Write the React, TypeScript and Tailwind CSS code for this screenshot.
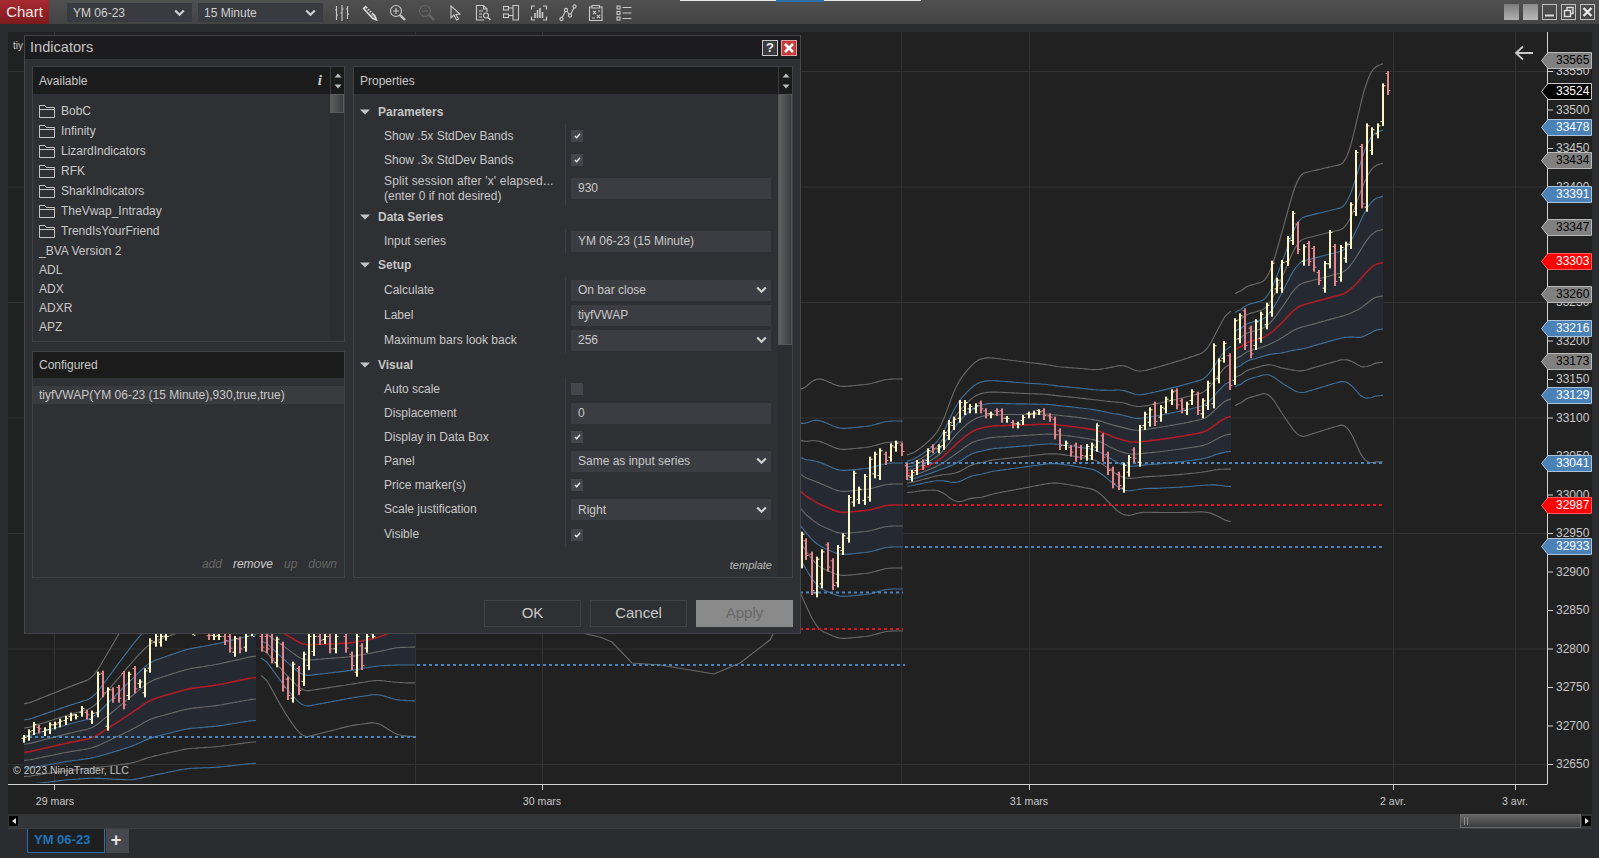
import React from "react";

type P = [number, number];
const z5 = (a: number[][]): P[] => a.map(([x, y]) => [x / 3, 620 + y / 3]);
const z6 = (a: number[][]): P[] => a.map(([x, y]) => [790 + x / 3, 350 + y / 3]);
const z7 = (a: number[][]): P[] => a.map(([x, y]) => [1200 + x / 3, 50 + y / 3]);

const interp = (pts: P[], x: number) => {
  if (x <= pts[0][0]) return pts[0][1];
  for (let i = 1; i < pts.length; i++) {
    if (x <= pts[i][0]) {
      const t = (x - pts[i - 1][0]) / (pts[i][0] - pts[i - 1][0]);
      return pts[i - 1][1] + t * (pts[i][1] - pts[i - 1][1]);
    }
  }
  return pts[pts.length - 1][1];
};

type Session = { x0: number; x1: number; mid: P[]; w: P[] };
const sessions: Session[] = [
  {
    x0: 24, x1: 256,
    mid: [[24, 753], [67, 743], [93, 738], [110, 727], [133, 712], [150, 700], [187, 689], [217, 685], [256, 677]],
    w: [[24, 8], [60, 9], [93, 10], [110, 13], [133, 17], [150, 19], [256, 21.5]],
  },
  {
    x0: 261, x1: 415,
    mid: [[261, 622], [287, 635], [303, 645], [350, 643], [377, 638], [397, 630], [415, 629]],
    w: [[261, 8], [287, 13.6], [303, 15.5], [350, 13.8], [377, 14], [397, 17.5], [415, 18]],
  },
  {
    x0: 795, x1: 903,
    mid: [[795, 485], [801, 493], [817, 503], [840, 513], [870, 510], [887, 505], [903, 505]],
    w: [[795, 16], [801, 17], [817, 21], [903, 21]],
  },
  {
    x0: 907, x1: 1231,
    mid: z6([[350, 375], [400, 355], [450, 330], [500, 280], [550, 240], [600, 228], [700, 225], [780, 222], [850, 230], [920, 240], [980, 265], [1030, 278], [1100, 270], [1180, 258], [1250, 245], [1280, 220], [1320, 195]]),
    w: [[350, 9], [400, 11], [450, 15], [500, 30], [570, 35], [800, 29], [920, 30], [1000, 38], [1050, 35], [1250, 40], [1320, 54]].map(([x, y]) => [790 + x / 3, y / 3] as P),
  },
  {
    x0: 1235, x1: 1383,
    mid: z7([[105, 910], [130, 880], [200, 860], [240, 825], [290, 770], [400, 740], [440, 730], [490, 680], [510, 650], [548, 635]]),
    w: [[105, 28], [205, 28], [295, 66], [440, 65], [500, 97], [548, 100]].map(([x, y]) => [1200 + x / 3, y / 3] as P),
  },
];

const GRAY = "#686868";
const BLUE = "#3f6f98";

function bandLine(s: Session, k: number) {
  const raw: P[] = [];
  for (let x = s.x0; x <= s.x1; x += 2) raw.push([x, interp(s.mid, x) - k * interp(s.w, x)]);
  const out: P[] = raw.map((p, i) => {
    let sum = 0, n = 0;
    for (let j = Math.max(0, i - 3); j <= Math.min(raw.length - 1, i + 3); j++) {
      sum += raw[j][1];
      n++;
    }
    return [p[0], sum / n] as P;
  });
  return out;
}
const toStr = (p: P[]) => p.map(([x, y]) => `${x.toFixed(1)},${y.toFixed(1)}`).join(" ");

// [x, top, bottom, 1 = up / 0 = down]
const bars: [number, number, number, number][] = [];
const addBars = (conv: (a: number[][]) => P[], rows: number[][]) => {
  rows.forEach(([x, t, b, u]) => {
    const [a, c] = conv([[x, t], [x, b]]);
    bars.push([a[0], a[1], c[1], u]);
  });
};
addBars(z5, [
  [72, 345, 368, 1], [86, 328, 362, 1], [101, 306, 345, 1], [117, 315, 340, 0], [134, 322, 348, 1], [150, 307, 342, 1], [165, 305, 328, 1], [181, 296, 322, 1], [197, 288, 315, 1], [212, 278, 303, 1], [228, 282, 298, 1], [245, 258, 290, 1], [261, 270, 298, 0], [276, 272, 312, 1], [293, 155, 292, 1], [309, 152, 232, 0], [324, 202, 332, 1], [339, 202, 248, 0], [356, 195, 248, 0], [372, 153, 268, 0], [388, 155, 240, 1], [404, 138, 220, 0], [420, 178, 204, 1], [436, 145, 232, 1], [451, 55, 158, 1], [468, 42, 80, 1], [483, 42, 80, 1], [497, 42, 62, 1], [579, 38, 44, 1], [628, 40, 60, 0], [643, 42, 60, 1], [657, 42, 60, 1], [674, 42, 75, 0], [690, 42, 98, 0], [705, 48, 110, 1], [720, 50, 100, 0], [737, 42, 95, 1], [755, 42, 48, 1],
  [785, 42, 95, 0], [800, 42, 100, 0], [815, 42, 130, 0], [830, 50, 142, 1], [848, 65, 215, 0], [864, 170, 240, 0], [879, 125, 248, 1], [896, 138, 225, 0], [912, 95, 198, 1], [927, 42, 150, 1], [942, 42, 108, 1], [960, 42, 75, 0], [975, 42, 72, 1], [990, 42, 100, 0], [1007, 42, 100, 1], [1038, 42, 98, 0], [1055, 95, 150, 0], [1071, 42, 170, 1], [1086, 70, 150, 0], [1101, 42, 98, 1], [1118, 42, 55, 1],
]);
addBars(z6, [
  [35, 545, 655, 1], [48, 565, 630, 0], [65, 605, 735, 0], [80, 620, 742, 1], [96, 598, 715, 1], [114, 577, 665, 0], [130, 625, 720, 0], [145, 585, 712, 1], [160, 550, 615, 1], [177, 435, 578, 1], [192, 362, 470, 1], [207, 410, 462, 1], [225, 372, 465, 1], [240, 320, 455, 1], [255, 305, 385, 1], [270, 295, 390, 1], [288, 305, 345, 0], [303, 280, 335, 1], [318, 272, 305, 1], [336, 278, 318, 0],
  [352, 340, 390, 0], [366, 360, 395, 1], [381, 330, 375, 1], [398, 328, 360, 0], [414, 295, 345, 1], [430, 283, 310, 0], [447, 283, 310, 1], [462, 240, 300, 1], [477, 210, 270, 1], [492, 200, 240, 1], [510, 150, 218, 1], [525, 150, 195, 1], [540, 162, 190, 1], [558, 160, 190, 1], [573, 152, 190, 0], [588, 175, 205, 0], [604, 185, 205, 1], [621, 175, 198, 0], [636, 175, 218, 0], [652, 198, 218, 1], [668, 210, 235, 0], [684, 215, 235, 1], [700, 195, 225, 1], [717, 185, 205, 1], [732, 182, 205, 1], [748, 178, 195, 1], [762, 175, 210, 0], [780, 190, 215, 0], [795, 200, 268, 0], [810, 235, 300, 0], [827, 272, 300, 1], [843, 285, 320, 0], [858, 278, 335, 0], [874, 285, 330, 0], [890, 282, 332, 1], [906, 278, 330, 1], [921, 220, 305, 1], [940, 250, 335, 0], [955, 305, 375, 0], [970, 350, 415, 0], [986, 365, 420, 0], [1002, 338, 428, 1], [1018, 315, 380, 1], [1033, 292, 338, 0], [1050, 225, 350, 1], [1065, 185, 240, 1], [1080, 172, 230, 1], [1096, 155, 228, 0], [1113, 165, 215, 1], [1128, 140, 190, 1], [1145, 118, 165, 1], [1161, 115, 178, 0], [1176, 145, 190, 0], [1191, 155, 195, 1], [1206, 118, 165, 1], [1224, 125, 195, 0], [1240, 145, 205, 1], [1255, 92, 180, 1],
]);
addBars(z7, [
  [42, 880, 1075, 1], [57, 925, 1000, 1], [72, 873, 938, 1], [90, 910, 1020, 0], [105, 805, 1005, 1], [120, 790, 880, 1], [135, 775, 900, 0], [153, 827, 925, 0], [168, 808, 900, 1], [183, 785, 878, 1], [200, 758, 838, 1], [216, 632, 800, 1], [231, 683, 730, 1], [246, 630, 728, 1], [264, 558, 648, 1], [279, 483, 585, 1], [295, 515, 612, 0], [312, 583, 647, 1], [327, 573, 648, 0], [342, 588, 665, 0], [357, 660, 705, 0], [375, 633, 728, 1], [390, 540, 655, 1], [405, 582, 708, 0], [423, 585, 695, 1], [438, 575, 638, 1], [453, 457, 597, 1], [468, 300, 498, 1], [486, 282, 475, 0], [500, 220, 485, 1], [516, 232, 315, 1], [534, 220, 265, 1], [550, 100, 228, 1], [565, 63, 135, 0],
]);

const py = (p: number) => 71 + (33550 - p) * 0.77;
const ticks = [33550, 33500, 33450, 33400, 33350, 33300, 33250, 33200, 33150, 33100, 33050, 33000, 32950, 32900, 32850, 32800, 32750, 32700, 32650];
const grids = [33550, 33400, 33250, 33100, 32950, 32800, 32650];
const dateCols: [number, string][] = [[55, "29 mars"], [542, "30 mars"], [1029, "31 mars"], [1393, "2 avr."], [1515, "3 avr."]];
const verticals = [54, 415, 542, 901, 1029, 1393, 1515];
const dashes: [number, number, number, string][] = [
  [23, 416, 737, "#4a86bd"], [417, 905, 665, "#4a86bd"], [800, 903, 592.6, "#4a86bd"], [800, 903, 629, "#e0161c"],
  [905, 1385, 463, "#4a86bd"], [905, 1385, 505, "#e0161c"], [905, 1385, 547, "#4a86bd"],
];
const markers: [number, string, string, string][] = [
  [33565, "#808080", "#000000", "#b9b9b9"], [33524, "#000000", "#ffffff", "#c8c8c8"], [33478, "#4a82b8", "#ffffff", "#a9c3da"], [33434, "#808080", "#000000", "#b9b9b9"],
  [33391, "#4a82b8", "#ffffff", "#a9c3da"], [33347, "#808080", "#000000", "#b9b9b9"], [33303, "#ff0000", "#ffffff", "#ff5a5a"], [33260, "#808080", "#000000", "#b9b9b9"],
  [33216, "#4a82b8", "#ffffff", "#a9c3da"], [33173, "#808080", "#000000", "#b9b9b9"], [33129, "#4a82b8", "#ffffff", "#a9c3da"], [33041, "#4a82b8", "#ffffff", "#a9c3da"],
  [32987, "#ff0000", "#ffffff", "#ff5a5a"], [32933, "#4a82b8", "#ffffff", "#a9c3da"],
];

function Chart() {
  const levels: [number, string][] = [[6, GRAY], [4, BLUE], [3, GRAY], [2, BLUE], [1, GRAY], [-1, GRAY], [-2, BLUE], [-3, GRAY], [-4, BLUE], [-6, GRAY]];
  return (
    <svg width="1584" height="782" viewBox="8 32 1584 782" className="block">
      <defs>
        <clipPath id="plot">
          <rect x="8" y="32" width="1539" height="751" />
        </clipPath>
      </defs>
      {grids.map((g) => (
        <line key={g} x1="8" x2="1547" y1={py(g) + 0.5} y2={py(g) + 0.5} stroke="#333333" />
      ))}
      {verticals.map((v) => (
        <line key={v} x1={v + 0.5} x2={v + 0.5} y1="32" y2="784" stroke="#333333" />
      ))}
      <g clipPath="url(#plot)">
        {sessions.map((s, i) => {
          const up = bandLine(s, 2);
          const dn = bandLine(s, -2);
          return <polygon key={i} points={toStr([...up, ...dn.slice().reverse()])} fill="#252a32" />;
        })}
        {sessions.map((s, i) => (
          <g key={i} fill="none" strokeWidth="1.15">
            {levels.map(([k, c]) => (
              <polyline key={k} points={toStr(bandLine(s, k))} stroke={c} />
            ))}
            <polyline points={toStr(bandLine(s, 0))} stroke="#b01b24" strokeWidth="1.6" />
          </g>
        ))}
        <polyline points="586,634 600,637 612,642 632,663 660,665 690,670 714,674 740,663 770,640 790,600 801,592" fill="none" stroke={GRAY} strokeWidth="1.15" />
        {dashes.map(([a, b, y, c], i) => (
          <line key={i} x1={a} x2={b} y1={y} y2={y} stroke={c} strokeWidth="2" strokeDasharray="3 3" />
        ))}
        {bars.map(([x, t, b, u], i) => {
          const c = u ? "#fbf7c6" : "#e0858c";
          const rx = Math.round(x);
          return (
            <g key={i} fill={c}>
              <rect x={rx - 1} y={t} width="2" height={b - t} />
              <rect x={rx + 1} y={u ? t + 2 : b - 5} width="1.5" height="1" />
              <rect x={rx - 2.5} y={u ? b - 5 : t + 2} width="1.5" height="1" />
            </g>
          );
        })}
      </g>
      <line x1="1547.5" x2="1547.5" y1="32" y2="784" stroke="#d4d4d4" />
      <line x1="8" x2="1547.5" y1="784.5" y2="784.5" stroke="#d4d4d4" />
      {ticks.map((t) => (
        <line key={t} x1="1548" x2="1553" y1={py(t) + 0.5} y2={py(t) + 0.5} stroke="#d4d4d4" />
      ))}
      {[54, 542, 1029, 1393, 1515].map((v) => (
        <line key={v} x1={v + 0.5} x2={v + 0.5} y1="785" y2="790" stroke="#d4d4d4" />
      ))}
      <path d="M1533 53H1516M1523 46.5L1516 53L1523 59.5" fill="none" stroke="#c8c8c8" strokeWidth="1.8" />
    </svg>
  );
}

function PriceMarker({ price, bg, fg, edge }: { price: number; bg: string; fg: string; edge: string }) {
  return (
    <div className="absolute left-[1533px] h-[17px] w-[51px]" style={{ top: Math.round(py(price) - 7.9 - 32) }}>
      <svg width="51" height="17" className="absolute left-0 top-0">
        <polygon points="0.5,8.5 7,0.5 50.5,0.5 50.5,16.5 7,16.5" fill={bg} stroke={edge} />
      </svg>
      <span className="absolute left-[15px] top-0 text-[12px] leading-[17px]" style={{ color: fg }}>{price}</span>
    </div>
  );
}

const I = ({ children, dim }: { children: React.ReactNode; dim?: boolean }) => (
  <svg width="18" height="18" viewBox="0 0 18 18" fill="none" stroke={dim ? "#666666" : "#c8c8c8"} strokeWidth="1.1" className="block">
    {children}
  </svg>
);

const toolIcons = [
  <I key="1"><path d="M3.5 2V16M2 6H3.5M3.5 11H5M9 1V17M7.5 9H9M9 5H10.5M14.5 2V15M13 5H14.5M14.5 10H16" /></I>,
  <I key="2"><path d="M2.5 4.5L4.5 2.5L14 12L15.5 16L11.5 14.5Z" fill="#8a8a8a" stroke="#dcdcdc" strokeWidth="1.4" /><path d="M5 6L8 3.5M7 8L10 5.5M9 10L12 7.5" stroke="#444" /></I>,
  <I key="3"><circle cx="7" cy="7" r="5.5" /><path d="M4 7H10M7 4V10" /><path d="M11 11L16 16" strokeWidth="2.4" /></I>,
  <I key="4" dim><circle cx="7" cy="7" r="5.5" /><path d="M4 7H10" /><path d="M11 11L16 16" strokeWidth="2.4" /></I>,
  <I key="5"><path d="M5 2L5 14L8 11L10.5 16L12.5 15L10 10.5L14 10Z" /></I>,
  <I key="6"><path d="M10 16H2.5V1.5H9.5L13 5V8M9.5 1.5V5H13M5 7H9M5 10H8M5 13H8" /><circle cx="12" cy="11.5" r="2.5" /><path d="M14 13.5L16.5 16" strokeWidth="1.6" /></I>,
  <I key="7"><rect x="1.5" y="2.5" width="5" height="3.5" /><rect x="1.5" y="10" width="5" height="3.5" /><path d="M6.5 4H11M6.5 11.5H11M11 1.5H16.5V16H11Z" /></I>,
  <I key="8"><path d="M5 2H1.5V5.5M13 2H16.5V5.5M5 16H1.5V12.5M13 16H16.5V12.5" /><path d="M5 14V9M7.5 14V6M10 14V4M12.5 14V8" strokeWidth="1.6" /></I>,
  <I key="9"><circle cx="2.5" cy="15" r="1.6" /><circle cx="7" cy="6" r="1.6" /><circle cx="11" cy="11.5" r="1.6" /><circle cx="15.5" cy="2.5" r="1.6" /><path d="M3.2 13.5L6.3 7.4M8 7.3L10 10.2M11.8 10L14.8 4" /></I>,
  <I key="10"><path d="M5 3H2.5V16.5H15V3H12.5" /><path d="M5 1.5H12.5V4H5Z" /><path d="M6 7L9 10M9 7L6 10M10 11L13 14M13 11L10 14M5 14H8M11 7H13" /></I>,
  <I key="11"><rect x="2" y="2" width="3" height="3" /><rect x="2" y="7.5" width="3" height="3" /><rect x="2" y="13" width="3" height="3" /><path d="M7.5 3.5H16.5M7.5 9H16.5M7.5 14.5H16.5" /></I>,
];

const Chevron = ({ className }: { className?: string }) => (
  <svg width="11" height="8" viewBox="0 0 11 8" className={className}>
    <path d="M1.2 1.5L5.5 5.8L9.8 1.5" fill="none" stroke="#d0d0d0" strokeWidth="2.2" />
  </svg>
);

function Toolbar() {
  return (
    <div className="relative flex h-6 shrink-0 items-center bg-gradient-to-b from-[#505050] to-[#444444]">
      <div className="absolute left-[680px] top-0 flex h-[2px] w-[241px]">
        <div className="h-px w-[96px] bg-[#e8e8e8]" />
        <div className="h-[2px] w-[48px] bg-[#2c6ea8]" />
        <div className="h-px w-[97px] bg-[#e8e8e8]" />
      </div>
      <div className="flex h-6 w-[49px] items-center justify-center bg-gradient-to-b from-[#a82a30] to-[#7d1a1e] text-[15px] text-[#f0e6e6]">Chart</div>
      <div className="ml-[18px] mt-px flex h-[19px] w-[125px] items-center justify-between bg-[#3a3b40] pl-[6px] pr-[7px] text-[12px] text-[#d0d0d0]">
        <span>YM 06-23</span>
        <Chevron />
      </div>
      <div className="ml-[6px] mt-px flex h-[19px] w-[125px] items-center justify-between bg-[#3a3b40] pl-[6px] pr-[7px] text-[12px] text-[#d0d0d0]">
        <span>15 Minute</span>
        <Chevron />
      </div>
      <div className="ml-[10px] mt-px flex items-center gap-[10.2px]">{toolIcons}</div>
      <div className="ml-auto mr-[4px] flex items-center gap-[4px]">
        <div className="h-[16px] w-[15px] bg-gradient-to-b from-[#7c7c7c] to-[#b0b0b0]" />
        <div className="h-[16px] w-[15px] bg-gradient-to-b from-[#8c8c8c] to-[#b8b8b8]" />
        <div className="flex h-[16px] w-[15px] items-center justify-center border border-[#c0c0c0]">
          <svg width="13" height="14" viewBox="0 0 13 14"><path d="M2 10.5H11" stroke="#d8d8d8" strokeWidth="2" /></svg>
        </div>
        <div className="flex h-[16px] w-[15px] items-center justify-center border border-[#c0c0c0]">
          <svg width="13" height="14" viewBox="0 0 13 14" fill="none" stroke="#e0e0e0" strokeWidth="1.4"><rect x="5" y="2.5" width="6" height="6" /><rect x="2.5" y="5.5" width="6" height="6" fill="#4a4a4a" /></svg>
        </div>
        <div className="flex h-[16px] w-[15px] items-center justify-center border border-[#c0c0c0]">
          <svg width="13" height="14" viewBox="0 0 13 14"><path d="M2.5 3L10.5 11M10.5 3L2.5 11" stroke="#e8e8e8" strokeWidth="2.4" /></svg>
        </div>
      </div>
    </div>
  );
}

const Arrows = ({ className }: { className: string }) => (
  <div className={`flex flex-col items-center justify-center gap-[6px] border-l border-[#3a3b3e] ${className}`}>
    <svg width="8" height="5"><path d="M4 0.5L7.5 4.5H0.5Z" fill="#bbbbbb" /></svg>
    <svg width="8" height="5"><path d="M4 4.5L7.5 0.5H0.5Z" fill="#bbbbbb" /></svg>
  </div>
);

const Folder = () => (
  <svg width="16" height="13" viewBox="0 0 16 13" fill="none" stroke="#c4c4c4" className="mr-[6px] shrink-0">
    <path d="M0.5 12.5V0.5H6L7.5 2.5H15.5V12.5ZM0.5 4.5H15.5" />
  </svg>
);

const avail: [string, boolean, string][] = [
  ["BobC", true, "h-5"], ["Infinity", true, "h-5"], ["LizardIndicators", true, "h-5"], ["RFK", true, "h-5"], ["SharkIndicators", true, "h-5"], ["TheVwap_Intraday", true, "h-5"], ["TrendIsYourFriend", true, "h-5"],
  ["_BVA Version 2", false, "h-[19px]"], ["ADL", false, "h-[19px]"], ["ADX", false, "h-[19px]"], ["ADXR", false, "h-[19px]"], ["APZ", false, "h-[19px]"],
];

const Field = ({ children, select }: { children: React.ReactNode; select?: boolean }) => (
  <div className="flex h-[21px] w-[200px] items-center justify-between bg-[#3c3d42] pl-[7px] pr-[4px]">
    <span>{children}</span>
    {select && <Chevron />}
  </div>
);

const Check = ({ on = true }: { on?: boolean }) => (
  <div className="flex h-3 w-3 items-center justify-center bg-[#45464b]">
    {on && (
      <svg width="7" height="6" viewBox="0 0 8 7"><path d="M1 3.5L3 5.5L7 1" fill="none" stroke="#f0f0f0" strokeWidth="1.7" /></svg>
    )}
  </div>
);

const Group = ({ title }: { title: string }) => (
  <div className="flex h-6 items-center pl-[6px] font-bold text-[#c4c4c4]">
    <svg width="10" height="6" viewBox="0 0 10 6" className="mr-[8px]"><path d="M0 0.5H10L5 5.5Z" fill="#c4c4c4" /></svg>
    <span>{title}</span>
  </div>
);

const Row = ({ label, h, children }: { label: React.ReactNode; h: string; children: React.ReactNode }) => (
  <div className={`flex items-stretch ${h}`}>
    <div className="flex w-[211px] items-center pl-[30px] leading-[15px]">{label}</div>
    <div className="flex items-center border-l border-[#3c3d40] pl-[5px]">{children}</div>
  </div>
);

function Dialog() {
  return (
    <div className="absolute left-6 top-[35px] flex h-[599px] w-[777px] flex-col border border-[#45464a] bg-[#2f3033] text-[12px] text-[#c8c8c8]">
      <div className="flex h-[23px] shrink-0 items-center justify-between bg-[#1c1c1e] pl-[5px] pr-[3px]">
        <span className="text-[14.6px] text-[#c4c4c4]">Indicators</span>
        <div className="flex items-center gap-[3px]">
          <div className="flex h-4 w-4 items-center justify-center border border-[#c8c8c8] bg-[#3a3b3e] text-[13px] font-bold leading-none text-[#f0f0f0]">?</div>
          <div className="flex h-4 w-4 items-center justify-center border border-[#e0a0a0] bg-[#c23a3a]">
            <svg width="12" height="12" viewBox="0 0 12 12"><path d="M2 2L10 10M10 2L2 10" stroke="#ffffff" strokeWidth="2.6" /></svg>
          </div>
        </div>
      </div>
      <div className="flex flex-1 gap-[8px] pl-[7px] pt-[7px]">
        <div className="flex w-[313px] flex-col gap-[9px]">
          <div className="relative flex h-[276px] flex-col border border-[#404144]">
            <div className="flex h-[27px] shrink-0 items-center justify-between bg-[#1b1b1b] pl-[6px]">
              <span>Available</span>
              <div className="flex h-full items-center">
                <span className="mr-[8px] [font-family:'Liberation_Serif',serif] text-[15px] font-bold italic">i</span>
                <Arrows className="h-full w-[14px]" />
              </div>
            </div>
            <div className="flex flex-1">
              <div className="flex-1 pl-[6px] pt-[7px]">
                {avail.map(([t, f, h]) => (
                  <div key={t} className={`flex items-center ${h}`}>
                    {f && <Folder />}
                    <span>{t}</span>
                  </div>
                ))}
              </div>
              <div className="w-[14px] bg-[#2c2d30]">
                <div className="h-[19px] border border-[#5a5b5e] bg-gradient-to-r from-[#5e5e5e] to-[#3a3b3e]" />
              </div>
            </div>
          </div>
          <div className="flex h-[227px] flex-col border border-[#404144]">
            <div className="flex h-[26px] shrink-0 items-center bg-[#1b1b1b] pl-[6px]">Configured</div>
            <div className="mt-[8px] flex h-[18px] items-center bg-[#3a3b3e] pl-[6px]">tiyfVWAP(YM 06-23 (15 Minute),930,true,true)</div>
            <div className="mt-auto flex h-[26px] items-center justify-end gap-[11px] pr-[7px] italic text-[#666666]">
              <span>add</span>
              <span className="text-[#cccccc]">remove</span>
              <span>up</span>
              <span>down</span>
            </div>
          </div>
        </div>
        <div className="flex h-[512px] w-[440px] flex-col border border-[#404144]">
          <div className="flex h-[27px] shrink-0 items-center justify-between bg-[#1b1b1b] pl-[6px]">
            <span>Properties</span>
            <Arrows className="h-full w-[14px]" />
          </div>
          <div className="flex flex-1">
            <div className="flex flex-1 flex-col pt-[6px]">
              <Group title="Parameters" />
              <Row label="Show .5x StdDev Bands" h="h-6"><Check /></Row>
              <Row label="Show .3x StdDev Bands" h="h-6"><Check /></Row>
              <Row h="h-[33px]" label={<span><span className="tracking-[0.16px]">Split session after 'x' elapsed...</span><br />(enter 0 if not desired)</span>}><div className="mb-px"><Field>930</Field></div></Row>
              <Group title="Data Series" />
              <Row label="Input series" h="h-6"><Field>YM 06-23 (15 Minute)</Field></Row>
              <Group title="Setup" />
              <Row label="Calculate" h="h-[26px]"><Field select>On bar close</Field></Row>
              <Row label="Label" h="h-[24px]"><Field>tiyfVWAP</Field></Row>
              <Row label="Maximum bars look back" h="h-[26px]"><Field select>256</Field></Row>
              <Group title="Visual" />
              <Row label="Auto scale" h="h-6"><Check on={false} /></Row>
              <Row label="Displacement" h="h-6"><Field>0</Field></Row>
              <Row label="Display in Data Box" h="h-6"><Check /></Row>
              <Row label="Panel" h="h-6"><Field select>Same as input series</Field></Row>
              <Row label="Price marker(s)" h="h-6"><Check /></Row>
              <Row label="Scale justification" h="h-[25px]"><Field select>Right</Field></Row>
              <Row label="Visible" h="h-[25px]"><Check /></Row>
              <div className="mt-auto h-[24px] pr-[6px] pt-[4px] text-right text-[11px] italic text-[#b8b8b8]">template</div>
            </div>
            <div className="w-[14px] bg-[#2c2d30]">
              <div className="h-[251px] border border-[#55565a] bg-gradient-to-r from-[#636363] to-[#3a3b3e]" />
            </div>
          </div>
        </div>
      </div>
      <div className="flex h-[56px] shrink-0 justify-end gap-[9px] pr-[7px] pt-[22px] text-[15px]">
        <div className="flex h-[27px] w-[97px] items-center justify-center border border-[#404144]">OK</div>
        <div className="flex h-[27px] w-[97px] items-center justify-center border border-[#404144]">Cancel</div>
        <div className="flex h-[27px] w-[97px] items-center justify-center bg-[#8a8a8a] text-[#696969]">Apply</div>
      </div>
    </div>
  );
}

export default function App() {
  return (
    <div className="relative flex h-[858px] w-[1599px] flex-col overflow-hidden bg-[#2b2c2f] [font-family:'Liberation_Sans',Arial,sans-serif] text-[12px]">
      <Toolbar />
      <div className="flex flex-1 flex-col pl-2 pr-[7px] pt-2">
        <div className="relative bg-[#212121]">
          <Chart />
          <span className="absolute left-[5px] top-[6px] text-[10px] text-[#c8c8c8]">tiy</span>
          <span className="absolute left-[5px] top-[731px] text-[10.5px] text-[#c4c4c4]">© 2023 NinjaTrader, LLC</span>
          {ticks.map((t) => (
            <span key={t} className="absolute left-[1548px] text-[12px] leading-[14px] text-[#c8c8c8]" style={{ top: py(t) - 7 - 32 }}>{t}</span>
          ))}
          {markers.map(([p, bg, fg, edge]) => (
            <PriceMarker key={p} price={p} bg={bg} fg={fg} edge={edge} />
          ))}
          {dateCols.map(([x, t]) => (
            <span key={t} className="absolute top-[762px] w-20 text-center text-[10.6px] text-[#c8c8c8]" style={{ left: x - 8 - 40 }}>{t}</span>
          ))}
        </div>
        <div className="flex h-[14px] items-center justify-between bg-[#343537]">
          <div className="ml-px flex h-[10px] w-[9px] items-center justify-center bg-black">
            <svg width="4" height="6"><path d="M4 0V6L0 3Z" fill="#e0e0e0" /></svg>
          </div>
          <div className="flex h-full items-center">
            <div className="flex h-[14px] w-[121px] items-center gap-[2px] border border-[#6a6a6a] bg-gradient-to-b from-[#666666] to-[#3c3c3c] pl-[3px]">
              <div className="h-[8px] w-px bg-[#8a8a8a]" />
              <div className="h-[8px] w-px bg-[#8a8a8a]" />
            </div>
            <div className="ml-px mr-px flex h-[10px] w-[9px] items-center justify-center bg-black">
              <svg width="4" height="6"><path d="M0 0V6L4 3Z" fill="#e0e0e0" /></svg>
            </div>
          </div>
        </div>
        <div className="flex h-[30px] border-t border-[#3c3d40] pl-[19px]">
          <div className="flex h-6 w-[78px] items-center border border-t-0 border-[#2a6ea6] bg-[#1e1f21] pb-px pl-[6px] text-[13px] font-bold text-[#1f74b8]">YM 06-23</div>
          <div className="ml-px flex h-6 w-[23px] items-center justify-center bg-[#47484d] pb-[2px] pr-[3px] text-[18px] font-bold leading-none text-[#e4e4e4]">+</div>
        </div>
      </div>
      <Dialog />
    </div>
  );
}
